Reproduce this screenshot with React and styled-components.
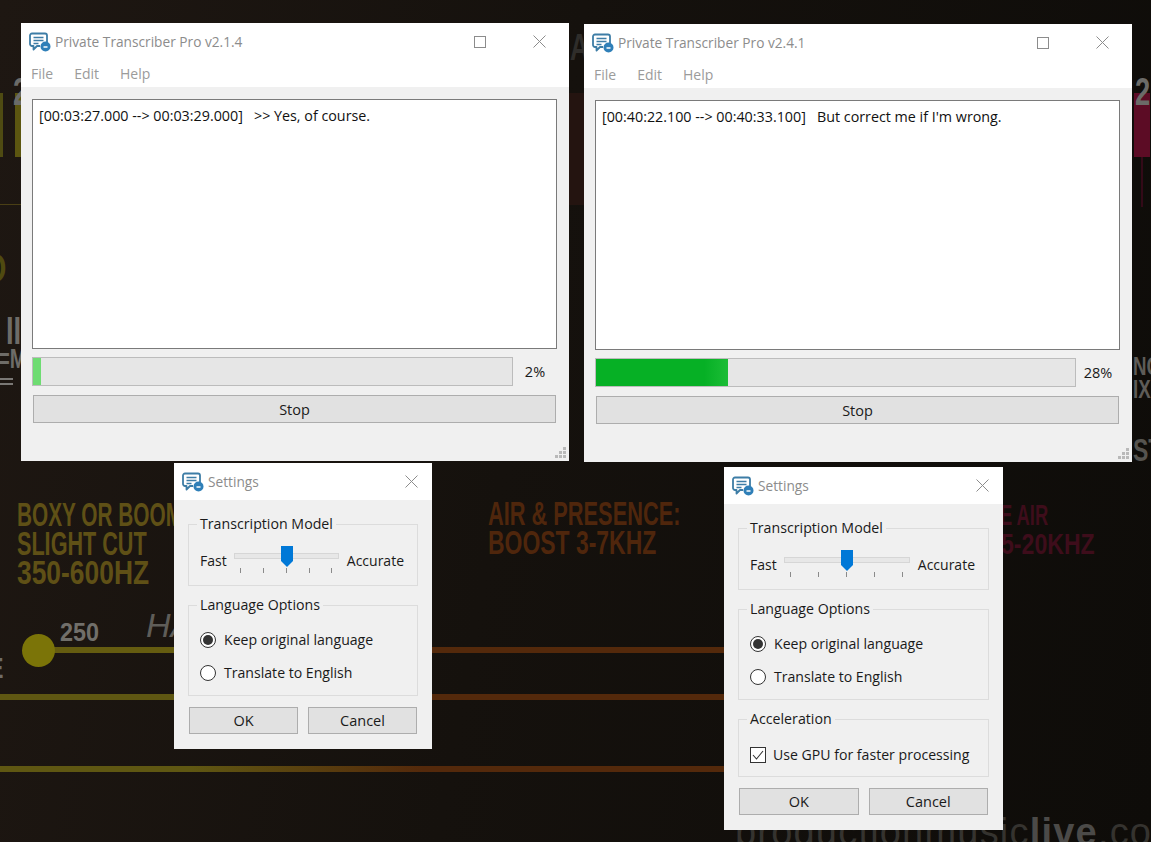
import styled, { createGlobalStyle } from "styled-components";

const Global = createGlobalStyle`
  html, body { margin: 0; padding: 0; background: #14110d; }
  * { box-sizing: border-box; }
`;

const Desktop = styled.div`
  position: relative;
  width: 1151px;
  height: 842px;
  overflow: hidden;
  font-family: "Open Sans", "Noto Sans", sans-serif;
  font-size: 14px;
  color: #1a1a1a;
  background: linear-gradient(100deg, #1e1712 0%, #15110d 45%, #0e0c09 100%);
`;

// poster behind the windows
const Stripe = styled.div`
  position: absolute;
  left: ${(p) => p.$x}px;
  top: ${(p) => p.$y}px;
  width: ${(p) => p.$w}px;
  height: ${(p) => p.$h}px;
  background: ${(p) => p.$color};
`;
const Knob = styled.div`
  position: absolute;
  left: 22px;
  top: 634px;
  width: 33px;
  height: 33px;
  border-radius: 50%;
  background: #7b7408;
`;
const PosterText = styled.div`
  position: absolute;
  left: ${(p) => p.$x}px;
  top: ${(p) => p.$y}px;
  font-family: "Liberation Sans", sans-serif;
  font-weight: ${(p) => p.$weight || 700};
  font-size: ${(p) => p.$size || 33}px;
  line-height: 1;
  white-space: pre;
  color: ${(p) => p.$color};
  transform: scaleX(${(p) => p.$squeeze || 0.72});
  transform-origin: left top;
`;
const Watermark = styled.div`
  position: absolute;
  left: 735px;
  top: 812px;
  font-family: "Liberation Sans", sans-serif;
  font-size: 38px;
  line-height: 40px;
  letter-spacing: 1.2px;
  white-space: pre;
  color: #35332f;
  b { color: #4b4a48; }
`;

const Win = styled.div`
  position: absolute;
  left: ${(p) => p.$x}px;
  top: ${(p) => p.$y}px;
  width: ${(p) => p.$w}px;
  height: ${(p) => (p.$h ? p.$h + "px" : "auto")};
  display: flex;
  flex-direction: column;
  background: #f0f0f0;
`;
const TitleBar = styled.div`
  display: flex;
  align-items: center;
  height: 37px;
  flex: none;
  padding-left: 8px;
  background: #fff;
`;
const Title = styled.span`
  flex: 1;
  margin-left: 4px;
  font-size: 13.7px;
  color: #8c8c8c;
  white-space: nowrap;
`;
const Control = styled.div`
  width: ${(p) => p.$w}px;
  height: 100%;
  display: flex;
  align-items: center;
  justify-content: center;
  flex: none;
`;
const MenuBar = styled.div`
  display: flex;
  gap: 21px;
  height: 27px;
  padding: 3px 0 0 10px;
  background: #fff;
  color: #9b9b9b;
  font-size: 14px;
  line-height: 21px;
  flex: none;
`;
const Client = styled.div`
  position: relative;
  flex: 1;
  display: flex;
  flex-direction: column;
  padding: 12px 12px 0 11px;
`;
const Transcript = styled.div`
  height: 250px;
  flex: none;
  padding: 6px;
  background: #fff;
  border: 1px solid #7a7a7a;
  font-size: 14.3px;
  line-height: 20px;
  white-space: pre;
  color: #111;
`;
const ProgressRow = styled.div`
  display: flex;
  align-items: center;
  margin-top: 8px;
  height: 29px;
`;
const Track = styled.div`
  width: 481px;
  flex: none;
  height: 100%;
  background: #e6e6e6;
  border: 1px solid #bcbcbc;
`;
const Fill = styled.div`
  height: 100%;
  width: calc(${(p) => p.$value}% - 2px);
  background: ${(p) => p.$color};
`;
const Percent = styled.span`
  flex: 1;
  text-align: center;
  font-size: 14.5px;
  color: #1a1a1a;
`;
const Button = styled.button`
  flex: ${(p) => (p.$wide ? "none" : 1)};
  height: ${(p) => p.$h || 27}px;
  margin: ${(p) => (p.$wide ? "9px 1px 0" : 0)};
  padding: 0;
  background: #e1e1e1;
  border: 1px solid #adadad;
  font-family: inherit;
  font-size: 14.5px;
  color: #1a1a1a;
`;
const Grip = styled.div`
  position: absolute;
  right: 3px;
  bottom: 3px;
  display: grid;
  grid-template-columns: repeat(3, 3px);
  grid-template-rows: repeat(3, 3px);
  gap: 1px;
`;
const GripDot = styled.i`
  background: #b9b9b9;
  grid-column: ${(p) => p.$c};
  grid-row: ${(p) => p.$r};
`;

const SettingsBody = styled.div`
  display: flex;
  flex-direction: column;
  gap: 9px;
  padding: 14px 14px 15px;
`;
const Group = styled.fieldset`
  margin: 0;
  padding: ${(p) => p.$pad || "0 13px 0 11px"};
  height: ${(p) => p.$h}px;
  min-width: 0;
  border: 1px solid #dcdcdc;
  legend {
    margin-left: -3px;
    padding: 0 3px;
    line-height: 20px;
    font-size: 14.2px;
    color: #1a1a1a;
  }
`;
const SliderRow = styled.div`
  display: flex;
  align-items: flex-start;
  gap: 7.5px;
  padding-top: 17px;
  line-height: 20px;
`;
const Slider = styled.div`
  position: relative;
  flex: 1;
  height: 22px;
`;
const Rail = styled.div`
  height: 6px;
  margin-top: 2px;
  background: #e7e7e7;
  border: 1px solid #d6d6d6;
`;
const Thumb = styled.svg`
  position: absolute;
  left: 50%;
  top: -5px;
  margin-left: -6px;
`;
const Ticks = styled.div`
  display: flex;
  justify-content: space-between;
  padding: 9px 7px 0 6px;
`;
const Tick = styled.i`
  width: 1px;
  height: 5px;
  background: #8a8a8a;
`;
const OptionRow = styled.div`
  display: flex;
  align-items: center;
  gap: ${(p) => p.$gap || 8}px;
  height: 33px;
  line-height: 20px;
  font-size: 14.1px;
`;
const Radio = styled.span`
  width: 16px;
  height: 16px;
  flex: none;
  display: flex;
  align-items: center;
  justify-content: center;
  background: #fff;
  border: 1px solid #333;
  border-radius: 50%;
  &::after {
    content: "";
    width: 10px;
    height: 10px;
    border-radius: 50%;
    background: ${(p) => (p.$on ? "#333" : "transparent")};
  }
`;
const Check = styled.span`
  width: 16px;
  height: 16px;
  flex: none;
  display: flex;
  align-items: center;
  justify-content: center;
  background: #fff;
  border: 1px solid #333;
`;
const Actions = styled.div`
  display: flex;
  gap: 10px;
  margin: 2px 1px 0;
`;

function AppIcon() {
  return (
    <svg width="22" height="20" viewBox="0 0 22 20" fill="none">
      <path
        d="M3 1.5h13a2 2 0 0 1 2 2v6.5M11 14H8l-3.5 3.5V14H3a2 2 0 0 1-2-2V3.5a2 2 0 0 1 2-2"
        stroke="#3d7da6"
        strokeWidth="1.8"
        strokeLinejoin="round"
      />
      <path d="M4.5 5.5h10M4.5 8.5h10M4.5 11.500h5" stroke="#3d7da6" strokeWidth="1.4" />
      <circle cx="16.500" cy="14.500" r="5" fill="#2f7fb8" />
      <path d="M14.500 15h4" stroke="#fff" strokeWidth="1.5" />
    </svg>
  );
}

function CloseIcon() {
  return (
    <svg width="13" height="13" viewBox="0 0 13 13">
      <path d="M.5.5l12 12M12.500.5l-12 12" stroke="#8c8c8c" strokeWidth="1" />
    </svg>
  );
}

function MaxIcon() {
  return (
    <svg width="12" height="12" viewBox="0 0 12 12">
      <rect x=".5" y=".5" width="11" height="11" fill="none" stroke="#8c8c8c" />
    </svg>
  );
}

function MainWindow({ x, y, version, line, value, color }) {
  return (
    <Win $x={x} $y={y} $w={548} $h={438}>
      <TitleBar>
        <AppIcon />
        <Title>Private Transcriber Pro {version}</Title>
        <Control $w={58}>
          <MaxIcon />
        </Control>
        <Control $w={60}>
          <CloseIcon />
        </Control>
      </TitleBar>
      <MenuBar>
        <span>File</span>
        <span>Edit</span>
        <span>Help</span>
      </MenuBar>
      <Client>
        <Transcript>{line}</Transcript>
        <ProgressRow>
          <Track>
            <Fill $value={value} $color={color} />
          </Track>
          <Percent>{value}%</Percent>
        </ProgressRow>
        <Button $wide $h={28}>
          Stop
        </Button>
        <Grip>
          <GripDot $c={3} $r={1} />
          <GripDot $c={2} $r={2} />
          <GripDot $c={3} $r={2} />
          <GripDot $c={1} $r={3} />
          <GripDot $c={2} $r={3} />
          <GripDot $c={3} $r={3} />
        </Grip>
      </Client>
    </Win>
  );
}

function SettingsWindow({ x, y, w, gpu }) {
  return (
    <Win $x={x} $y={y} $w={w}>
      <TitleBar>
        <AppIcon />
        <Title>Settings</Title>
        <Control $w={42}>
          <CloseIcon />
        </Control>
      </TitleBar>
      <SettingsBody>
        <Group $h={72}>
          <legend>Transcription Model</legend>
          <SliderRow>
            <span>Fast</span>
            <Slider>
              <Rail />
              <Thumb width="12" height="21" viewBox="0 0 12 21">
                <path d="M0 0h12v15l-6 6-6-6z" fill="#0078d7" />
              </Thumb>
              <Ticks>
                <Tick />
                <Tick />
                <Tick />
                <Tick />
                <Tick />
              </Ticks>
            </Slider>
            <span>Accurate</span>
          </SliderRow>
        </Group>
        <Group $h={101} $pad="8px 11px 0">
          <legend>Language Options</legend>
          <OptionRow>
            <Radio $on />
            Keep original language
          </OptionRow>
          <OptionRow>
            <Radio />
            Translate to English
          </OptionRow>
        </Group>
        {gpu && (
          <Group $h={68} $pad="9px 11px 0">
            <legend>Acceleration</legend>
            <OptionRow $gap={7}>
              <Check>
                <svg width="12" height="10" viewBox="0 0 12 10" fill="none">
                  <path d="M1 5l3.500 4L11 1" stroke="#333" strokeWidth="1.1" />
                </svg>
              </Check>
              Use GPU for faster processing
            </OptionRow>
          </Group>
        )}
        <Actions>
          <Button>OK</Button>
          <Button>Cancel</Button>
        </Actions>
      </SettingsBody>
    </Win>
  );
}

export default function App() {
  return (
    <Desktop>
      <Global />
      {/* top band of the poster */}
      <Stripe $x={0} $y={93} $w={3} $h={64} $color="#4f4b12" />
      <Stripe $x={15} $y={93} $w={6} $h={64} $color="#5c5610" />
      <Stripe $x={0} $y={204} $w={21} $h={1} $color="#4a3f15" />
      <Stripe $x={569} $y={93} $w={15} $h={112} $color="#241410" />
      <Stripe $x={1134} $y={93} $w={16} $h={64} $color="#5c0c25" />
      <Stripe $x={1141} $y={157} $w={2} $h={50} $color="#330a18" />
      <PosterText $x={13} $y={73} $size={38} $color="#6b6b68">2</PosterText>
      <PosterText $x={1135} $y={73} $size={38} $color="#6b6b68">2</PosterText>
      <PosterText $x={570} $y={30} $size={36} $color="#2f2d2a">AL</PosterText>
      <PosterText $x={-16} $y={248} $size={40} $color="#4f4a10">O</PosterText>
      <PosterText $x={6} $y={312} $size={38} $color="#6e6c68">II</PosterText>
      <PosterText $x={-2} $y={345} $size={28} $color="#6e6c68">=M</PosterText>
      <Stripe $x={0} $y={378} $w={13} $h={2} $color="#7a7875" />
      <Stripe $x={0} $y={383} $w={13} $h={2} $color="#7a7875" />
      <PosterText $x={1133} $y={353} $size={26} $color="#5e5c58">NG</PosterText>
      <PosterText $x={1133} $y={376} $size={26} $color="#5e5c58">IX</PosterText>
      <PosterText $x={1133} $y={434} $size={32} $color="#55534f">ST</PosterText>

      {/* equaliser captions */}
      <PosterText $x={17} $y={498} $squeeze={0.63} $color="#5f5016">BOXY OR BOOM</PosterText>
      <PosterText $x={17} $y={527} $squeeze={0.655} $color="#5f5016">SLIGHT CUT</PosterText>
      <PosterText $x={17} $y={556} $squeeze={0.8} $color="#5f5016">350-600HZ</PosterText>
      <PosterText $x={488} $y={497} $squeeze={0.66} $color="#4f260c">AIR &amp; PRESENCE:</PosterText>
      <PosterText $x={488} $y={526} $squeeze={0.695} $color="#4f260c">BOOST 3-7KHZ</PosterText>
      <PosterText $x={1000} $y={500} $size={30} $squeeze={0.61} $color="#3e0d1b">E AIR</PosterText>
      <PosterText $x={1001} $y={529} $size={30} $squeeze={0.77} $color="#3e0d1b">5-20KHZ</PosterText>
      <PosterText $x={60} $y={619} $size={26} $squeeze={0.9} $color="#716f6a">250</PosterText>
      <PosterText $x={146} $y={608} $size={34} $squeeze={1} $weight={400} $color="#5f5d58">
        <i>HA</i>
      </PosterText>
      <PosterText $x={-11} $y={653} $size={30} $color="#6e6c68">E</PosterText>

      <Stripe $x={40} $y={647} $w={140} $h={6} $color="#655c10" />
      <Knob />
      <Stripe $x={0} $y={694} $w={180} $h={6} $color="#5f5712" />
      <Stripe $x={430} $y={647} $w={300} $h={6} $color="#54290b" />
      <Stripe $x={430} $y={694} $w={300} $h={6} $color="#54290b" />
      <Stripe $x={0} $y={766} $w={730} $h={6} $color="linear-gradient(90deg, #5f5712 26%, #54290b 58%)" />
      <Watermark>
        productionmusic<b>live</b>.co
      </Watermark>

      <MainWindow
        x={21}
        y={23}
        version="v2.1.4"
        line="[00:03:27.000 --> 00:03:29.000]   >> Yes, of course."
        value={2}
        color="#6edc72"
      />
      <MainWindow
        x={584}
        y={24}
        version="v2.4.1"
        line="[00:40:22.100 --> 00:40:33.100]   But correct me if I'm wrong."
        value={28}
        color="linear-gradient(90deg, #06b025 82%, #1cbd36)"
      />
      <SettingsWindow x={174} y={463} w={258} />
      <SettingsWindow x={724} y={467} w={279} gpu />
    </Desktop>
  );
}
